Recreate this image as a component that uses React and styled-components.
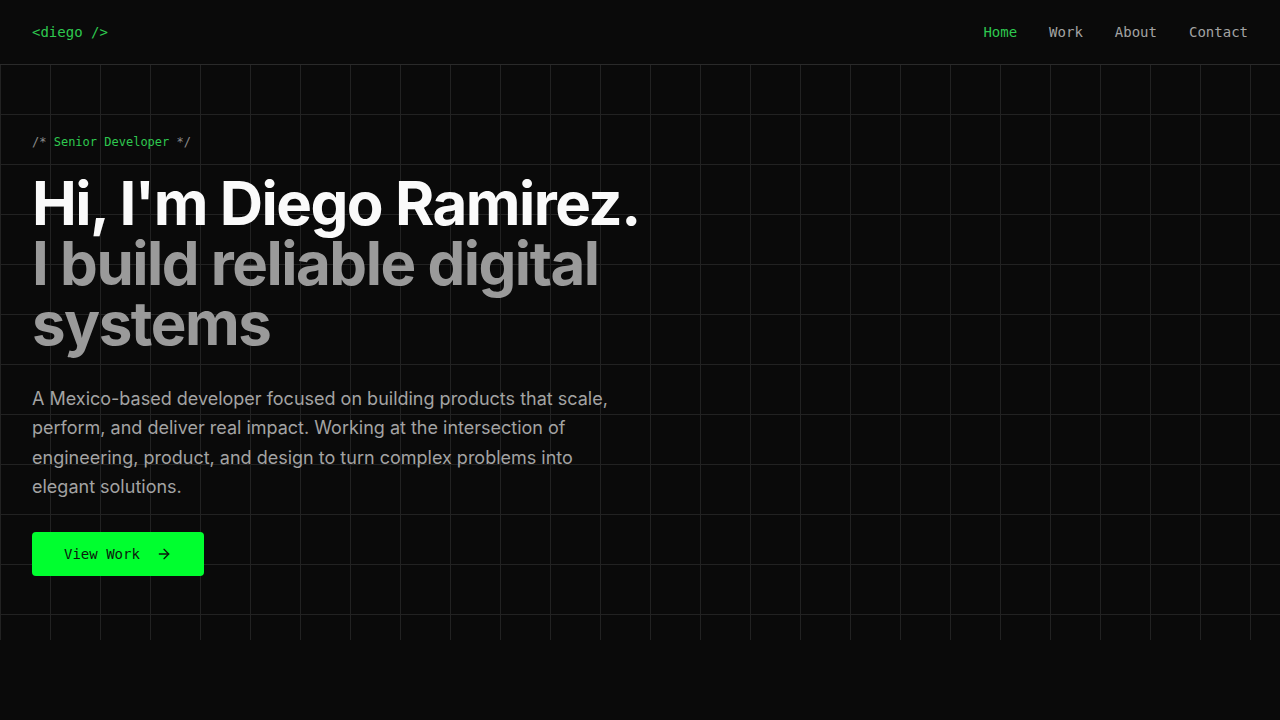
import React from "react";
import styled, { createGlobalStyle } from "styled-components";

const GlobalStyle = createGlobalStyle`
    * {
        box-sizing: border-box;
    }
    body {
        margin: 0;
        background-color: #0a0a0a;
        font-family: "Inter", "Liberation Sans", sans-serif;
    }
`;

const mono = `"DejaVu Sans Mono", "Liberation Mono", monospace`;

const App = () => {
    return (
        <>
            <GlobalStyle />
            <Page>
                <Header>
                    <Logo>&lt;diego /&gt;</Logo>
                    <NavList>
                        <NavItem active>Home</NavItem>
                        <NavItem>Work</NavItem>
                        <NavItem>About</NavItem>
                        <NavItem>Contact</NavItem>
                    </NavList>
                </Header>
                <Hero>
                    <Tag>
                        /* <TagAccent>Senior Developer</TagAccent> */
                    </Tag>
                    <Title>
                        <TitleLine>Hi, I'm Diego Ramirez.</TitleLine>
                        <TitleLine muted>I build reliable digital</TitleLine>
                        <TitleLine muted>systems</TitleLine>
                    </Title>
                    <Lead>
                        A Mexico-based developer focused on building products that scale,
                        perform, and deliver real impact. Working at the intersection of
                        engineering, product, and design to turn complex problems into
                        elegant solutions.
                    </Lead>
                    <PrimaryButton>
                        View Work
                        <svg width="16" height="16" viewBox="0 0 24 24" fill="none" stroke="currentColor" strokeWidth="2" strokeLinecap="round" strokeLinejoin="round">
                            <path d="M5 12h14" />
                            <path d="m12 5 7 7-7 7" />
                        </svg>
                    </PrimaryButton>
                </Hero>
            </Page>
        </>
    );
};

const Page = styled.div`
    min-height: 720px;
    background-color: #0a0a0a;
`;

const Header = styled.header`
    display: flex;
    justify-content: space-between;
    align-items: center;
    height: 65px;
    padding: 0 32px;
    border-bottom: 1px solid #2a2a2a;
`;

const Logo = styled.div`
    font-family: ${mono};
    font-size: 14px;
    color: #2ec84f;
`;

const NavList = styled.nav`
    display: flex;
    align-items: center;
    gap: 32px;
`;

const NavItem = styled.a`
    font-family: ${mono};
    font-size: 14px;
    color: ${(p) => (p.active ? "#2ec84f" : "#a3a3a3")};
    cursor: pointer;
`;

const Hero = styled.section`
    display: flex;
    flex-direction: column;
    align-items: flex-start;
    height: 575px;
    padding: 69px 32px 0;
    background-color: #0a0a0a;
    background-image:
        linear-gradient(to right, #222 1px, transparent 1px),
        linear-gradient(to bottom, #222 1px, transparent 1px);
    background-size: 50px 50px;
    background-position: 0 -1px;
`;

const Tag = styled.p`
    margin: 0;
    font-family: ${mono};
    font-size: 12px;
    line-height: 16px;
    color: #8a8a8a;
`;

const TagAccent = styled.span`
    color: #2ec84f;
`;

const Title = styled.h1`
    margin: 23px 0 0;
    font-size: 60px;
    line-height: 60px;
    font-weight: 700;
    letter-spacing: -0.025em;
`;

const TitleLine = styled.span`
    display: block;
    color: ${(p) => (p.muted ? "#9a9a9a" : "#fafafa")};
`;

const Lead = styled.p`
    margin: 31px 0 0;
    max-width: 580px;
    font-size: 18px;
    line-height: 29.25px;
    color: #a3a3a3;
`;

const PrimaryButton = styled.button`
    display: flex;
    align-items: center;
    gap: 16px;
    height: 44px;
    margin-top: 31px;
    padding: 0 32px;
    border: none;
    border-radius: 4px;
    background-color: #00ff2f;
    color: #0a1a0c;
    font-family: ${mono};
    font-size: 14px;
    cursor: pointer;
`;

export default App;
